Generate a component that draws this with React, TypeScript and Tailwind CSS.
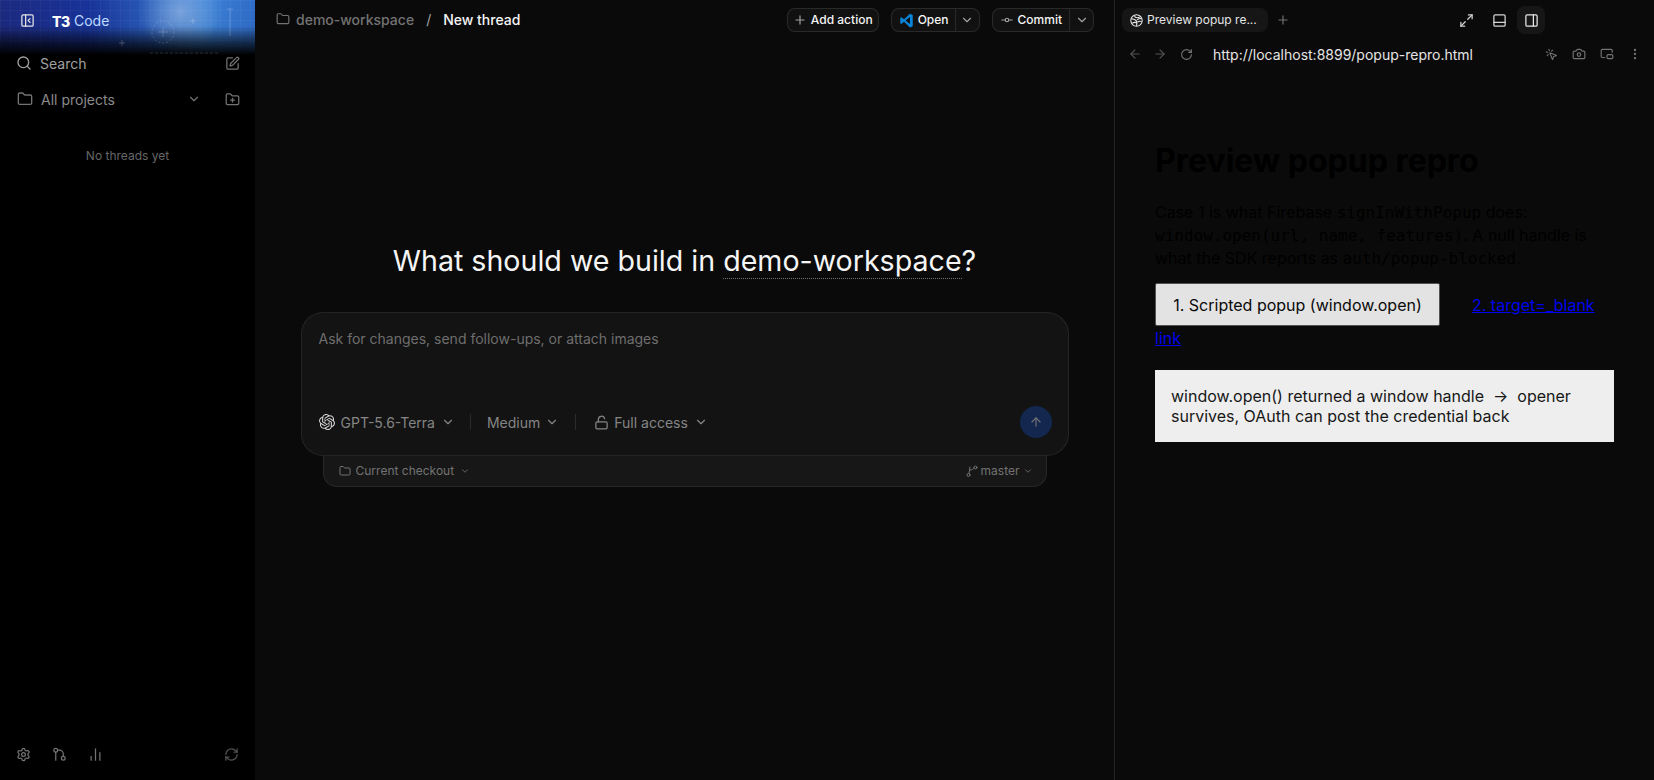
import { ArrowLeft, ArrowRight, ArrowUp, Camera, ChartNoAxesColumn, ChevronDown, EllipsisVertical, Folder, FolderPlus, GitCommitHorizontal, LockOpen, Maximize2, MousePointerClick, PanelBottom, PanelLeftClose, PanelRight, PictureInPicture2, Plus, RefreshCw, RotateCw, Search, Settings, SquarePen } from "lucide-react";

const sans = "font-['Inter','Noto_Sans',sans-serif]";
const mono = "font-['DejaVu_Sans_Mono',monospace] text-[16px]";

function OpenAiMark() {
    return (
        <svg viewBox="0 0 24 24" className="h-4 w-4 text-neutral-300" fill="currentColor">
            <path d="M22.28 9.82a5.98 5.98 0 0 0-.52-4.91 6.05 6.05 0 0 0-6.51-2.9A6.07 6.07 0 0 0 4.98 4.18a5.98 5.98 0 0 0-4 2.9 6.05 6.05 0 0 0 .75 7.1 5.98 5.98 0 0 0 .51 4.91 6.05 6.05 0 0 0 6.52 2.9A5.98 5.98 0 0 0 13.26 24a6.06 6.06 0 0 0 5.77-4.21 5.99 5.99 0 0 0 4-2.9 6.06 6.06 0 0 0-.75-7.07zM13.26 22.43a4.48 4.48 0 0 1-2.88-1.04l.14-.08 4.78-2.76a.79.79 0 0 0 .39-.68v-6.74l2.02 1.17a.07.07 0 0 1 .04.05v5.58a4.5 4.5 0 0 1-4.49 4.5zM3.6 18.3a4.47 4.47 0 0 1-.54-3.01l.14.08 4.78 2.76a.77.77 0 0 0 .78 0l5.84-3.37v2.33a.08.08 0 0 1-.03.06l-4.84 2.79a4.5 4.5 0 0 1-6.13-1.64zM2.34 7.9a4.49 4.49 0 0 1 2.37-1.97v5.68a.77.77 0 0 0 .39.68l5.81 3.35-2.02 1.17a.08.08 0 0 1-.07 0L3.99 14a4.5 4.5 0 0 1-1.65-6.1zm16.6 3.86-5.83-3.39 2.02-1.16a.08.08 0 0 1 .07 0l4.83 2.79a4.49 4.49 0 0 1-.68 8.1v-5.68a.79.79 0 0 0-.41-.66zm2.01-3.02-.14-.09-4.77-2.78a.78.78 0 0 0-.79 0L9.41 9.23V6.9a.07.07 0 0 1 .03-.06l4.83-2.79a4.5 4.5 0 0 1 6.68 4.66zM8.31 12.86l-2.02-1.16a.08.08 0 0 1-.04-.06V6.07a4.5 4.5 0 0 1 7.38-3.45l-.14.08-4.78 2.76a.79.79 0 0 0-.39.68zm1.1-2.37 2.6-1.5 2.61 1.5v3l-2.6 1.5-2.61-1.5z" />
        </svg>
    );
}

function VsCodeMark() {
    return (
        <svg viewBox="0 0 24 24" className="h-[15px] w-[15px]">
            <path fill="#0a84d6" d="M17.5 1 8 10 3.7 6.6 2 7.5v9l1.7.9L8 14l9.5 9 4.5-2V3zm0 5.5v11L10.5 12z" />
        </svg>
    );
}

function PreviewGlobe() {
    return (
        <svg viewBox="0 0 24 24" className="h-[13px] w-[13px] shrink-0 text-neutral-200" fill="none" stroke="currentColor" strokeWidth="2">
            <circle cx="12" cy="12" r="10.5" />
            <path d="M3 9c4 0 6 1 8 3s2 6 1 10M21 8c-4 0-6 1-8 3M8 3c1 3 3 4 5 4s4 0 5-2M4 17c3-2 5-2 8-1M14 15c2-2 4-2 7-1" />
        </svg>
    );
}

function BranchesIcon() {
    return (
        <svg viewBox="0 0 24 24" className="h-[15px] w-[15px]" fill="none" stroke="currentColor" strokeWidth="2" strokeLinecap="round">
            <circle cx="6" cy="5" r="3" />
            <path d="M6 8v13" />
            <circle cx="18" cy="18" r="3" />
            <path d="M9 5h3a6 6 0 0 1 6 6v4" />
        </svg>
    );
}

function BranchSmall() {
    return (
        <svg viewBox="0 0 24 24" className="ml-auto h-3 w-3" fill="none" stroke="currentColor" strokeWidth="2" strokeLinecap="round">
            <circle cx="5" cy="20" r="3" />
            <path d="M6 17 8 4" />
            <path d="M8 10c5 0 7-2 8-5" />
            <circle cx="19" cy="5" r="3" />
        </svg>
    );
}

function HeaderBanner() {
    return (
        <div className="absolute inset-x-0 top-0 h-[58px] bg-[linear-gradient(90deg,#1c2a80_0%,#18339a_35%,#2c62bf_62%,#3d83d8_80%,#2f6cc9_100%)]">
            <div className="absolute inset-0 bg-[radial-gradient(circle_at_180px_12px,rgba(150,185,230,0.7),rgba(150,185,230,0)_42px)]" />
            <div className="absolute inset-0 bg-[linear-gradient(rgba(255,255,255,0.035)_1px,transparent_1px),linear-gradient(90deg,rgba(255,255,255,0.035)_1px,transparent_1px)] bg-[size:10px_10px]" />
            <div className="absolute inset-0 bg-[linear-gradient(180deg,rgba(0,0,0,0)_0%,rgba(0,0,0,0.03)_45%,rgba(0,0,0,0.6)_72%,rgba(0,0,0,1)_95%)]" />
            <svg viewBox="0 0 255 58" className="absolute inset-0 h-full w-full text-white/25" fill="none" stroke="currentColor">
                <circle cx="163" cy="32" r="11" strokeDasharray="2 2" strokeWidth="0.7" />
                <path d="M158 32h10M163 27v10M190 21h6M193 18v6M119 43h6M122 40v6M227 9h6M230 9v27" strokeWidth="0.8" strokeDasharray="none" />
                <path d="M150 53h70" strokeDasharray="3 2" strokeWidth="0.6" />
            </svg>
        </div>
    );
}

function Sidebar() {
    return (
        <aside className="relative flex h-full w-[255px] shrink-0 flex-col bg-black">
            <HeaderBanner />
            <div className="relative flex h-[40px] items-center pl-5">
                <PanelLeftClose className="h-[15px] w-[15px] text-neutral-200" />
                <span className="ml-[17px] mt-[2px] text-[14px] font-extrabold tracking-tight text-white">T3</span>
                <span className="ml-1 text-[14px] text-blue-200">Code</span>
            </div>
            <div className="relative mt-[8px] flex h-[30px] items-center pl-[16px] pr-[15px] text-neutral-400">
                <Search className="h-[16px] w-[16px]" />
                <span className="ml-[8px] text-[14px]">Search</span>
                <SquarePen className="ml-auto h-[15px] w-[15px] text-neutral-500" />
            </div>
            <div className="mt-[6px] flex h-[30px] items-center pl-[17px] pr-[15px] text-[#8a8a8a]">
                <Folder className="h-[16px] w-[16px] text-neutral-500" />
                <span className="ml-[8px] text-[14px]">All projects</span>
                <ChevronDown className="ml-auto h-[14px] w-[14px] text-neutral-500" />
                <FolderPlus className="ml-[24px] h-[15px] w-[15px] text-neutral-500" />
            </div>
            <p className="mt-[34px] text-center text-xs text-[#666]">No threads yet</p>
            <div className="mt-auto flex h-[48px] items-center gap-[21px] px-[16px] pb-1 text-neutral-500">
                <Settings className="h-[15px] w-[15px]" />
                <BranchesIcon />
                <ChartNoAxesColumn className="h-[15px] w-[15px]" />
                <RefreshCw className="ml-auto h-[15px] w-[15px] text-neutral-600" />
            </div>
        </aside>
    );
}

function TopBar() {
    return (
        <header className="flex h-[38px] shrink-0 items-center pl-[21px] pr-[20px] pt-[2px]">
            <Folder className="mb-[2px] h-[14px] w-[14px] text-neutral-500" />
            <span className="mb-[2px] ml-[6px] text-[14px] font-medium text-neutral-500">demo-workspace</span>
            <span className="mb-[2px] ml-3 text-[14px] text-neutral-400">/</span>
            <span className="mb-[2px] ml-3 text-[14px] font-medium text-neutral-100">New thread</span>
            <div className="ml-auto flex items-center gap-3">
                <button className="flex h-6 items-center gap-1 rounded-lg border border-white/10 bg-white/[0.03] px-[5px] text-xs font-medium text-neutral-100">
                    <Plus className="h-[14px] w-[14px] text-neutral-400" />
                    Add action
                </button>
                <div className="flex h-6 items-center rounded-lg border border-white/10 bg-white/[0.03] text-xs font-medium text-neutral-100">
                    <span className="flex items-center gap-1 pl-[7px] pr-[6px]">
                        <VsCodeMark />
                        Open
                    </span>
                    <span className="flex h-full w-6 items-center justify-center border-l border-white/10">
                        <ChevronDown className="h-[14px] w-[14px] text-neutral-400" />
                    </span>
                </div>
                <div className="flex h-6 items-center rounded-lg border border-white/10 bg-white/[0.03] text-xs font-medium text-neutral-100">
                    <span className="flex items-center gap-1 pl-[7px] pr-[7px]">
                        <GitCommitHorizontal className="h-[14px] w-[14px] text-neutral-400" />
                        Commit
                    </span>
                    <span className="flex h-full w-6 items-center justify-center border-l border-white/10">
                        <ChevronDown className="h-[14px] w-[14px] text-neutral-400" />
                    </span>
                </div>
            </div>
        </header>
    );
}

function Composer() {
    return (
        <div className="flex w-[768px] flex-col items-center">
            <div className="relative z-10 flex h-[144px] w-full flex-col rounded-[22px] border border-white/[0.07] bg-[#131313] pb-[17px] pl-[16px] pr-4 pt-[15px]">
                <p className="pl-px text-[14px] text-[#6e6e6e]">Ask for changes, send follow-ups, or attach images</p>
                <div className="mt-auto flex items-center pl-px text-[14px] text-[#858585]">
                    <OpenAiMark />
                    <span className="ml-[6px]">GPT-5.6-Terra</span>
                    <ChevronDown className="ml-[6px] h-[14px] w-[14px]" />
                    <span className="ml-[15px] mr-[16px] h-4 w-px bg-white/10" />
                    <span>Medium</span>
                    <ChevronDown className="ml-[5px] h-[14px] w-[14px]" />
                    <span className="ml-[16px] mr-[18px] h-4 w-px bg-white/10" />
                    <LockOpen className="h-[15px] w-[15px]" />
                    <span className="ml-[5px]">Full access</span>
                    <ChevronDown className="ml-[6px] h-[14px] w-[14px]" />
                    <span className="ml-auto flex h-8 w-8 items-center justify-center rounded-full bg-[#13274f]">
                        <ArrowUp className="h-[14px] w-[14px] text-neutral-500" />
                    </span>
                </div>
            </div>
            <div className="flex h-[31px] w-[724px] items-center rounded-b-[14px] border border-t-0 border-white/[0.07] bg-[#171717] pl-[15px] pr-[13px] text-xs text-neutral-500">
                <Folder className="h-3 w-3" />
                <span className="ml-[5px]">Current checkout</span>
                <ChevronDown className="ml-[6px] h-[10px] w-[10px]" />
                <BranchSmall />
                <span className="ml-[3px]">master</span>
                <ChevronDown className="ml-[3px] h-[10px] w-[10px]" />
            </div>
        </div>
    );
}

function Preview() {
    return (
        <section className="flex h-full w-[540px] shrink-0 flex-col border-l border-white/10">
            <div className="flex h-[40px] items-center pl-[7px] pr-[109px]">
                <div className="flex h-6 w-[146px] items-center gap-[4px] whitespace-nowrap rounded-lg bg-white/5 pl-2 text-xs text-neutral-200">
                    <PreviewGlobe />
                    Preview popup re...
                </div>
                <Plus className="ml-[8px] h-[14px] w-[14px] text-neutral-500" />
                <Maximize2 className="ml-auto h-[15px] w-[15px] text-neutral-300" />
                <PanelBottom className="ml-[18px] h-[15px] w-[15px] text-neutral-300" />
                <span className="ml-[10px] flex h-7 w-7 items-center justify-center rounded-lg bg-white/5">
                    <PanelRight className="h-[15px] w-[15px] text-neutral-200" />
                </span>
            </div>
            <div className="flex h-[28px] items-center pl-[13px] pr-[12px]">
                <ArrowLeft className="h-[14px] w-[14px] text-neutral-600" />
                <ArrowRight className="ml-[11px] h-[14px] w-[14px] text-neutral-600" />
                <RotateCw className="ml-[13px] h-[13px] w-[13px] text-neutral-500" />
                <span className="ml-[20px] text-[14px] text-neutral-200">http://localhost:8899/popup-repro.html</span>
                <MousePointerClick className="ml-auto h-[13px] w-[13px] text-neutral-500" />
                <Camera className="ml-[14px] h-[14px] w-[14px] text-neutral-500" />
                <PictureInPicture2 className="ml-[14px] h-[14px] w-[14px] text-neutral-500" />
                <EllipsisVertical className="ml-[14px] h-[14px] w-[14px] text-neutral-500" />
            </div>
            <div className="pl-[40px] pr-[40px] pt-[74px] text-black">
                <h1 className="text-[32px] font-bold leading-[38px]">Preview popup repro</h1>
                <p className="mt-[21px] text-base leading-[22px]">
                    Case 1 is what Firebase <code className={mono}>signInWithPopup</code> does:{" "}
                    <code className={mono}>window.open(url, name, features)</code>. A null handle is what the SDK reports as{" "}
                    <code className={mono}>auth/popup-blocked</code>.
                </p>
                <div className="mt-[13px] leading-[20px]">
                    <button className="mr-8 h-[43px] w-[285px] rounded-[2px] border border-neutral-600 bg-[#e3e3e3] text-base text-neutral-950">1. Scripted popup (window.open)</button>
                    <a className="text-base text-[#0000ee] underline">2. target=_blank link</a>
                </div>
                <div className="mt-[20px] bg-[#eeeeee] px-[16px] py-4 text-base leading-[20px] text-neutral-900">
                    window.open() returned a window handle<span className="mx-[9px]">→</span>opener survives, OAuth can post the credential back
                </div>
            </div>
        </section>
    );
}

export default function App() {
    return (
        <div className={`${sans} flex h-[780px] w-[1654px] overflow-hidden bg-[#0a0a0a]`}>
            <Sidebar />
            <main className="flex h-full min-w-0 flex-1 flex-col">
                <TopBar />
                <div className="flex flex-col items-center pt-[204px]">
                    <h2 className="text-[28.6px] leading-[38px] text-neutral-100">
                        What should we build in <span className="border-b border-dotted border-neutral-500">demo-workspace</span>?
                    </h2>
                    <div className="mt-[32px]">
                        <Composer />
                    </div>
                </div>
            </main>
            <Preview />
        </div>
    );
}
